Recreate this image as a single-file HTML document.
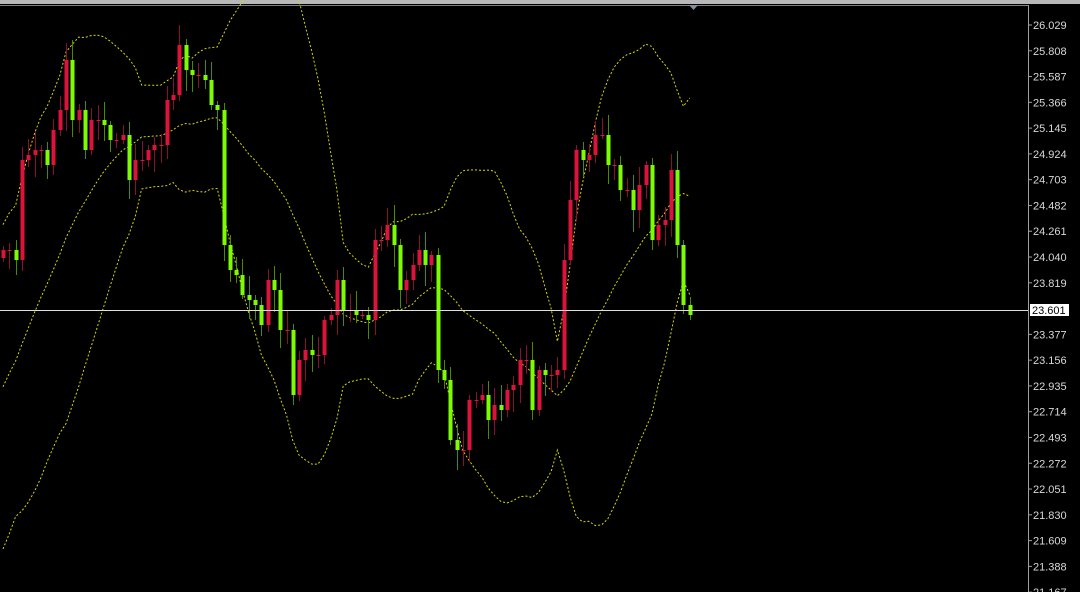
<!DOCTYPE html>
<html><head><style>
html,body{margin:0;padding:0;background:#000;width:1080px;height:592px;overflow:hidden}
svg{display:block}
text{font-family:"Liberation Sans",sans-serif;font-size:11px;fill:#d8d8d8}
</style></head><body>
<svg id="s" width="1080" height="592" xmlns="http://www.w3.org/2000/svg">
<rect x="0" y="0" width="1080" height="592" fill="#000"/>
<rect x="0" y="0" width="1080" height="4" fill="#b8b8b8"/>
<line x1="0" y1="5.5" x2="1028" y2="5.5" stroke="#808080"/>
<line x1="1028.5" y1="5" x2="1028.5" y2="592" stroke="#a0a0a0"/>
<polygon points="689,5 698,5 693.5,10" fill="#8090a0"/>
<g id="c"></g>
<line x1="0" y1="310.5" x2="1028" y2="310.5" stroke="#e0e0e0"/>
<g id="ax"></g>
</svg>
<script>
(function(){
var ys=[250,250,260,160,155,150,150,165,130,110,60,120,110,150,120,120,125,140,140,135,180,160,160,150,145,145,100,95,45,70,75,75,80,105,110,245,270,275,295,300,305,325,280,290,330,330,395,360,350,355,355,320,315,280,310,310,315,315,320,240,240,225,245,290,280,265,250,265,255,370,380,440,450,450,400,400,395,420,405,410,390,385,360,360,410,370,375,375,370,260,200,150,160,155,135,135,165,165,190,190,210,185,165,240,225,220,170,245,305,315];
var NS="http://www.w3.org/2000/svg",g=document.getElementById('c'),ax=document.getElementById('ax');
function el(t,a,p){var e=document.createElementNS(NS,t);for(var k in a)e.setAttribute(k,a[k]);(p||g).appendChild(e);return e;}
var step=6.3,x0=3;
var pad=[];for(var i=0;i<19;i++)pad.push(520-i*14);
var all=pad.concat(ys),up=[],mid=[],lo=[];
for(var i=0;i<ys.length;i++){var s=0,q=0;for(var j=i;j<i+20;j++){s+=all[j];}var m=s/20;for(var j=i;j<i+20;j++){q+=(all[j]-m)*(all[j]-m);}var sd=Math.sqrt(q/20);var x=x0+i*step;mid.push(x+','+m);up.push(x+','+(m-2*sd));lo.push(x+','+(m+2*sd));}
[up,mid,lo].forEach(function(p){el('polyline',{points:p.join(' '),fill:'none',stroke:'#d8d800','stroke-width':1,'stroke-dasharray':'2,2'});});
for(var i=0;i<ys.length;i++){
 var o=i?ys[i-1]:ys[0]+8,c=ys[i],x=Math.round(x0+i*step);
 var fall=c>o,tp=Math.min(o,c),bt=Math.max(o,c);
 var h=tp-4-((i*37)%17),l=bt+4+((i*53)%19);
 el('line',{x1:x+0.5,y1:h,x2:x+0.5,y2:l,stroke:fall?'#4a8a00':'#8a1030'});
 el('rect',{x:x-1.5,y:tp,width:4,height:Math.max(1,bt-tp),fill:fall?'#7cfc00':'#dc143c'});
}
var labs=['26.029','25.808','25.587','25.366','25.145','24.924','24.703','24.482','24.261','24.040','23.819','','23.377','23.156','22.935','22.714','22.493','22.272','22.051','21.830','21.609','21.388','21.167'];
for(var k=0;k<labs.length;k++){if(!labs[k])continue;var y=25+k*25.78;
 el('line',{x1:1028,y1:y,x2:1032,y2:y,stroke:'#a0a0a0'},ax);
 var t=el('text',{x:1033,y:y+4},ax);t.textContent=labs[k];}
el('rect',{x:1030,y:304,width:39,height:12,fill:'#fff'},ax);
var t=el('text',{x:1032,y:314,style:'fill:#000'},ax);t.textContent='23.601';
})();
</script>
</body></html>
